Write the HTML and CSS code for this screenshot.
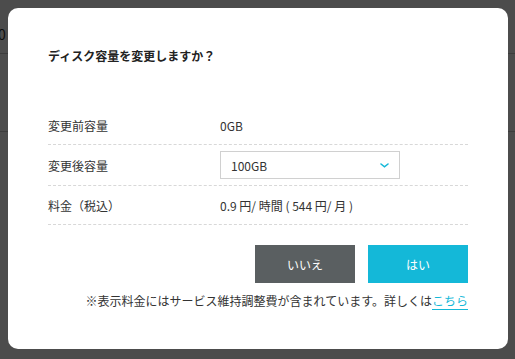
FILE: index.html
```html
<!DOCTYPE html>
<html lang="ja">
<head>
	<meta charset="UTF-8">
	<title>ディスク容量の変更</title>
	<link rel="stylesheet" href="styles.css">
</head>
<body>
	<!-- 背面のページ -->
	<div class="page">
		<div class="page_row page_row_first"><span class="page_val">0</span></div>
		<div class="page_row page_row_second"></div>
	</div>
	<div class="overlay"></div>

	<!-- モーダル -->
	<div class="modal">
		<h2 class="modal_title">ディスク容量を変更しますか？</h2>
		<dl class="spec">
			<div class="spec_row">
				<dt>変更前容量</dt>
				<dd>0GB</dd>
			</div>
			<div class="spec_row spec_row_select">
				<dt>変更後容量</dt>
				<dd>
					<div class="select">
						<span>100GB</span>
						<svg class="select_arrow" width="9" height="5" viewBox="0 0 9 5"><path d="M1 1l3.5 2.8L8 1" fill="none" stroke="#14b8d8" stroke-width="1.6" stroke-linecap="round"/></svg>
					</div>
				</dd>
			</div>
			<div class="spec_row">
				<dt>料金（税込）</dt>
				<dd>0.9 円/ 時間 ( 544 円/ 月 )</dd>
			</div>
		</dl>
		<div class="btns">
			<a href="javascript:;" class="btn btn_no">いいえ</a>
			<a href="javascript:;" class="btn btn_yes">はい</a>
		</div>
		<p class="note">※表示料金にはサービス維持調整費が含まれています。詳しくは<a href="javascript:;">こちら</a></p>
	</div>
</body>
</html>
```
FILE: styles.css
```css
*{
	padding:0;
	margin:0;
	box-sizing:border-box;
}
body{
	width:515px;
	height:359px;
	overflow:hidden;
	background:#fff;
	font-family:"Noto Sans CJK JP","Noto Sans",sans-serif;
	color:#333;
	position:relative;
}
/**背面のページ**/
.page{
	padding-top:22px;
}
.page_row{
	border-bottom:1px solid #c8c8c8;
	font-size:14px;
	color:#333;
}
.page_row_first{
	height:32px;
	padding-left:0;
	padding-top:2px;
}
.page_val{
	margin-left:-2px;
}
.page_row_second{
	height:78px;
}
.overlay{
	position:absolute;
	left:0;
	top:0;
	width:100%;
	height:100%;
	background:rgba(0,0,0,0.7);
}
/**モーダル本体**/
.modal{
	position:absolute;
	left:8px;
	top:8px;
	width:500px;
	height:341px;
	background:#fff;
	border-radius:10px;
	padding:38px 40px 0;
}
.modal_title{
	font-size:12px;
	font-weight:bold;
	line-height:20px;
	color:#222;
}
.spec{
	margin-top:40px;
	font-size:12px;
}
.spec_row{
	display:flex;
	align-items:center;
	height:39px;
	border-bottom:1px dashed #d8d8d8;
}
.spec_row_select{
	height:41px;
}
.spec_row dt{
	width:172px;
}
.select{
	width:180px;
	height:28px;
	border:1px solid #d0d0d0;
	display:flex;
	align-items:center;
	justify-content:space-between;
	padding:0 10px 0 10px;
}
.btns{
	display:flex;
	justify-content:flex-end;
	gap:13px;
	margin-top:20px;
}
.btn{
	display:flex;
	align-items:center;
	justify-content:center;
	width:100px;
	height:38px;
	color:#fff;
	font-size:12px;
	text-decoration:none;
}
.btn_no{
	background:#5a5f61;
}
.btn_yes{
	background:#14b8d8;
}
.note{
	margin-top:9px;
	text-align:right;
	font-size:12px;
	line-height:18px;
}
.note a{
	color:#14b8d8;
	text-decoration:none;
	border-bottom:1px solid #14b8d8;
}
```
